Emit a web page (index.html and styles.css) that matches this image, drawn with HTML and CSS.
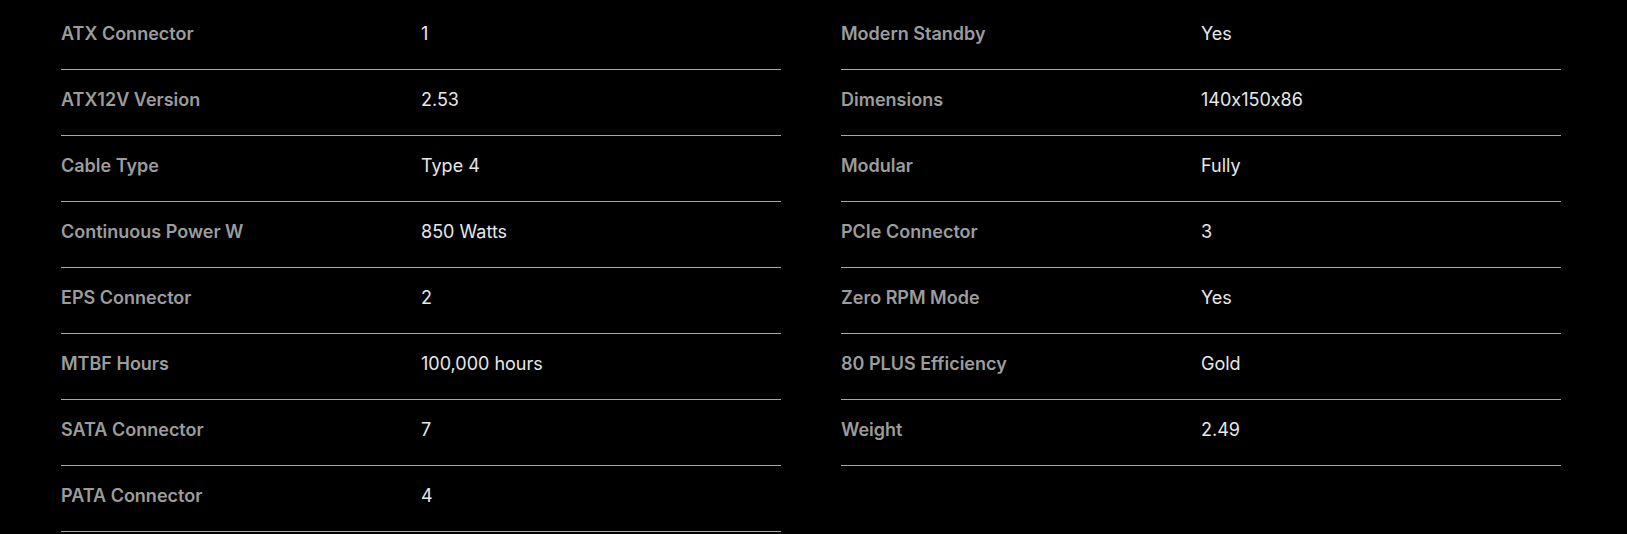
FILE: index.html
```html
<!DOCTYPE html>
<html>
<head>
<meta charset="utf-8">
<link rel="stylesheet" href="styles.css">
</head>
<body>
<div class="specs">
  <div class="col">
    <div class="row"><div class="label">ATX Connector</div><div class="value">1</div></div>
    <div class="row"><div class="label">ATX12V Version</div><div class="value">2.53</div></div>
    <div class="row"><div class="label">Cable Type</div><div class="value">Type 4</div></div>
    <div class="row"><div class="label">Continuous Power W</div><div class="value">850 Watts</div></div>
    <div class="row"><div class="label">EPS Connector</div><div class="value">2</div></div>
    <div class="row"><div class="label">MTBF Hours</div><div class="value">100,000 hours</div></div>
    <div class="row"><div class="label">SATA Connector</div><div class="value">7</div></div>
    <div class="row"><div class="label">PATA Connector</div><div class="value">4</div></div>
  </div>
  <div class="col">
    <div class="row"><div class="label">Modern Standby</div><div class="value">Yes</div></div>
    <div class="row"><div class="label">Dimensions</div><div class="value">140x150x86</div></div>
    <div class="row"><div class="label">Modular</div><div class="value">Fully</div></div>
    <div class="row"><div class="label">PCIe Connector</div><div class="value">3</div></div>
    <div class="row"><div class="label">Zero RPM Mode</div><div class="value">Yes</div></div>
    <div class="row"><div class="label">80 PLUS Efficiency</div><div class="value">Gold</div></div>
    <div class="row"><div class="label">Weight</div><div class="value">2.49</div></div>
  </div>
</div>
</body>
</html>
```
FILE: styles.css
```css
html, body {
  margin: 0;
  padding: 0;
  background: #000;
}
body {
  font-family: Inter, "Liberation Sans", sans-serif;
  font-size: 18px;
  font-feature-settings: "calt" 0;
}
.specs {
  display: flex;
  align-items: flex-start;
  gap: 60px;
  padding: 4px 0 0 61px;
}
.col {
  width: 720px;
  display: flex;
  flex-direction: column;
}
.row {
  display: grid;
  grid-template-columns: 1fr 1fr;
  padding: 18px 0 23px;
  line-height: 24px;
  border-bottom: 1px solid #a6a6a6;
}
.label {
  color: #9c9c9c;
  font-weight: 600;
}
.value {
  color: #e8e8e8;
  font-weight: 400;
}
```
